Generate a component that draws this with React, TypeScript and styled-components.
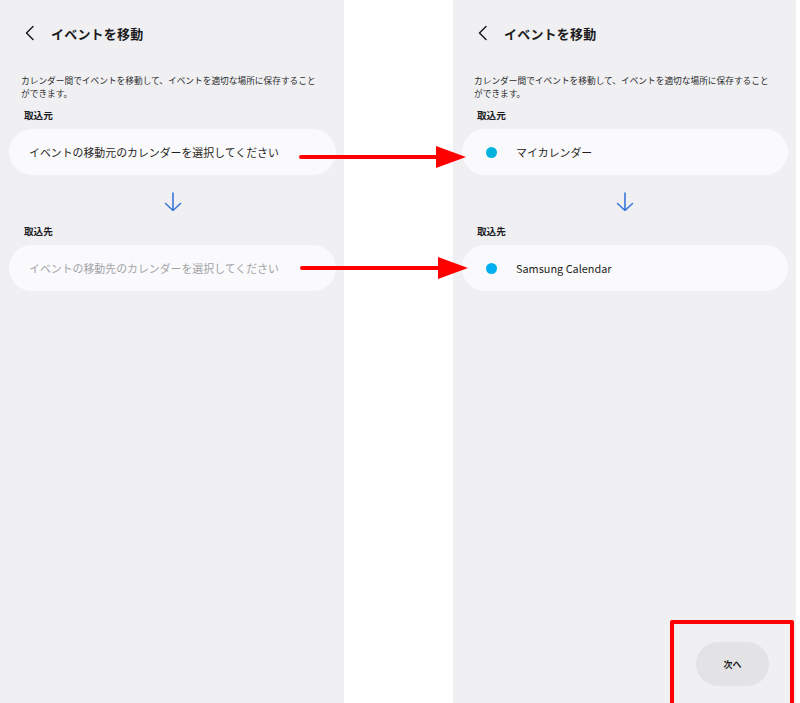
import React from "react"
import styled, { createGlobalStyle } from "styled-components"

const GlobalStyle = createGlobalStyle`
  html, body {
    margin: 0;
    padding: 0;
    background: #ffffff;
  }
  body {
    font-family: "Noto Sans CJK JP", "Noto Sans", "Liberation Sans", sans-serif;
    color: #1b1b1d;
  }
`

const Stage = styled.div`
  position: relative;
  display: flex;
  width: 800px;
  height: 703px;
  overflow: hidden;
  background: #ffffff;
`

const Screen = styled.div<{ $width: number }>`
  display: flex;
  flex-direction: column;
  width: ${(p) => p.$width}px;
  height: 100%;
  flex-shrink: 0;
  background: #f0f0f2;
  box-sizing: border-box;
  padding: 0 8px 17px 9px;
`

const Gutter = styled.div<{ $width: number }>`
  width: ${(p) => p.$width}px;
  flex-shrink: 0;
`

const Header = styled.div`
  display: flex;
  align-items: center;
  height: 66px;
  padding-left: 14px;
  gap: 14px;
`

const BackButton = styled.span`
  display: flex;
  width: 14px;
  height: 16px;
  color: #1b1b1d;
`

const Title = styled.h1`
  margin: 0;
  font-size: 13px;
  font-weight: 700;
  letter-spacing: 0.2px;
`

const Description = styled.p`
  margin: 8px 0 0 12px;
  font-size: 8.7px;
  line-height: 13px;
  color: #2a2a2c;
`

const SectionLabel = styled.div`
  margin: 9px 0 0 15px;
  font-size: 9.6px;
  font-weight: 700;
  line-height: 12px;
`

const Card = styled.div<{ $inset: number }>`
  display: flex;
  align-items: center;
  gap: 19px;
  height: 46px;
  margin-top: 8px;
  padding: 0 ${(p) => p.$inset}px;
  border-radius: 23px;
  background: #fafafc;
`

const CardText = styled.span<{ $muted?: boolean }>`
  font-size: 10.9px;
  color: ${(p) => (p.$muted ? "#a2a2a6" : "#1f1f21")};
  white-space: nowrap;
`

const Dot = styled.span<{ $color: string }>`
  width: 11px;
  height: 11px;
  border-radius: 50%;
  background: ${(p) => p.$color};
  flex-shrink: 0;
`

const Flow = styled.div`
  display: flex;
  justify-content: center;
  padding: 17px 0 4px;
  color: #3a78d8;
`

const Footer = styled.div`
  margin-top: auto;
  display: flex;
  justify-content: flex-end;
  padding-right: 19px;
`

const NextButton = styled.button`
  width: 73px;
  height: 44px;
  border: 0;
  border-radius: 22px;
  background: #e3e3e5;
  font-family: inherit;
  font-size: 9px;
  font-weight: 700;
  color: #1b1b1d;
`

const Callout = styled.svg`
  position: absolute;
  left: 0;
  top: 0;
  pointer-events: none;
`

const Highlight = styled.div`
  position: absolute;
  left: 670px;
  top: 620px;
  width: 124px;
  height: 90px;
  box-sizing: border-box;
  border: 4px solid #ff0000;
  border-radius: 2px;
`

type Pick = { label: string; color: string }

type ScreenProps = {
  width: number
  source?: Pick
  target?: Pick
  showNext?: boolean
}

const ChevronLeft = () => (
  <svg width="14" height="16" viewBox="0 0 14 16" fill="none">
    <path d="M10 1.5 L3.5 8 L10 14.5" stroke="currentColor" strokeWidth="1.5" strokeLinecap="round" strokeLinejoin="round" />
  </svg>
)

const ArrowDown = () => (
  <svg width="18" height="20" viewBox="0 0 18 20" fill="none">
    <path d="M9 1 V18.5 M1.5 11.5 L9 18.5 L16.5 11.5" stroke="currentColor" strokeWidth="1.6" strokeLinecap="round" strokeLinejoin="round" />
  </svg>
)

const CalendarCard = ({ pick, placeholder, muted }: { pick?: Pick; placeholder: string; muted?: boolean }) =>
  pick ? (
    <Card $inset={24}>
      <Dot $color={pick.color} />
      <CardText>{pick.label}</CardText>
    </Card>
  ) : (
    <Card $inset={20}>
      <CardText $muted={muted}>{placeholder}</CardText>
    </Card>
  )

const MoveEventsScreen: React.FC<ScreenProps> = ({ width, source, target, showNext }) => (
  <Screen $width={width}>
    <Header>
      <BackButton>
        <ChevronLeft />
      </BackButton>
      <Title>イベントを移動</Title>
    </Header>
    <Description>
      カレンダー間でイベントを移動して、イベントを適切な場所に保存すること
      <br />
      ができます。
    </Description>
    <SectionLabel>取込元</SectionLabel>
    <CalendarCard pick={source} placeholder="イベントの移動元のカレンダーを選択してください" />
    <Flow>
      <ArrowDown />
    </Flow>
    <SectionLabel>取込先</SectionLabel>
    <CalendarCard pick={target} placeholder="イベントの移動先のカレンダーを選択してください" muted />
    {showNext && (
      <Footer>
        <NextButton>次へ</NextButton>
      </Footer>
    )}
  </Screen>
)

const arrows = [
  { x1: 301, x2: 466, y: 157 },
  { x1: 302, x2: 468, y: 268 },
]

export default function App() {
  return (
    <>
      <GlobalStyle />
      <Stage>
        <MoveEventsScreen width={344} />
        <Gutter $width={109} />
        <MoveEventsScreen
          width={343}
          source={{ label: "マイカレンダー", color: "#00b3df" }}
          target={{ label: "Samsung Calendar", color: "#00aff0" }}
          showNext
        />
        <Callout width="800" height="703" viewBox="0 0 800 703">
          {arrows.map((a, i) => (
            <g key={i} fill="#ff0000" stroke="#ff0000">
              <line x1={a.x1} y1={a.y} x2={a.x2 - 26} y2={a.y} strokeWidth="4" strokeLinecap="round" />
              <polygon points={`${a.x2 - 30},${a.y - 11} ${a.x2},${a.y} ${a.x2 - 30},${a.y + 11}`} stroke="none" />
            </g>
          ))}
        </Callout>
        <Highlight />
      </Stage>
    </>
  )
}
